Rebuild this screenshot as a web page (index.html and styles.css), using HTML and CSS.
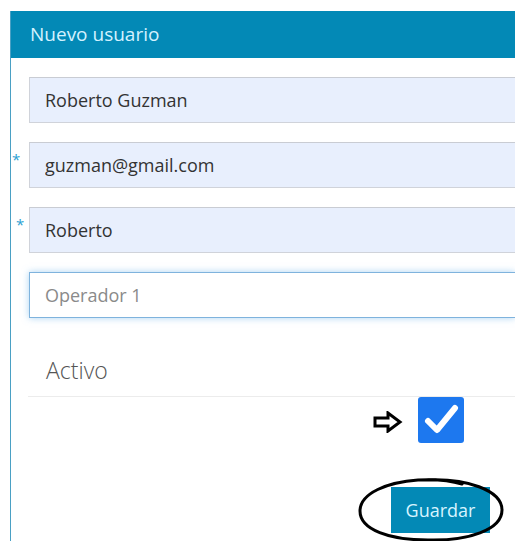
FILE: index.html
```html
<!DOCTYPE html>
<html lang="es">
<head>
<meta charset="utf-8">
<title>Nuevo usuario</title>
<link rel="stylesheet" href="styles.css">
</head>
<body>
<div class="panel">
  <div class="panel-heading">Nuevo usuario</div>
  <div class="panel-body">
    <div class="field">
      <input class="form-control filled" type="text" value="Roberto Guzman">
    </div>
    <div class="field">
      <span class="required req-1">*</span>
      <input class="form-control filled" type="email" value="guzman@gmail.com">
    </div>
    <div class="field">
      <span class="required req-2">*</span>
      <input class="form-control filled" type="text" value="Roberto">
    </div>
    <div class="field">
      <input class="form-control focused" type="text" placeholder="Operador 1">
    </div>

    <div class="legend">Activo</div>

    <div class="check-row">
      <svg class="hint-arrow" width="30" height="22" viewBox="0 0 30 22">
        <path d="M2 7 H15 V2 L27 11 L15 20 V15 H2 Z" fill="none" stroke="#000" stroke-width="3" stroke-linejoin="miter"/>
      </svg>
      <span class="checkbox">
        <svg width="46" height="46" viewBox="0 0 46 46">
          <path d="M10 24 L19 33 L37 11" fill="none" stroke="#fff" stroke-width="6" stroke-linecap="round" stroke-linejoin="round"/>
        </svg>
      </span>
    </div>

    <div class="actions">
      <span class="btn-wrap">
        <button class="btn-primary" type="button">Guardar</button>
        <svg class="mark" width="150" height="68" viewBox="0 0 150 68">
          <path d="M70 4 C110 2 146 14 146 34 C146 54 112 65 72 64 C34 64 4 54 4 35 C4 17 32 6 62 4 C80 3 96 5 106 8" fill="none" stroke="#000" stroke-width="3" stroke-linecap="round"/>
        </svg>
      </span>
    </div>
  </div>
</div>
</body>
</html>
```

FILE: styles.css
```css
html, body {
  margin: 0;
  padding: 0;
  background: #fff;
}

body {
  font-family: "Open Sans", "Noto Sans", "Liberation Sans", sans-serif;
  color: #333;
}

.panel {
  box-sizing: border-box;
  margin: 11px 0 0 10px;
  min-height: calc(100vh - 11px);
  border-left: 1px solid #4aa0c4;
}

.panel-heading {
  height: 47px;
  line-height: 46px;
  padding-left: 19px;
  background: #0389b6;
  color: #d4f2ff;
  font-size: 19px;
}

.panel-body {
  padding: 19px 0 0 18px;
}

.field {
  position: relative;
  margin-bottom: 19px;
}

.form-control {
  display: block;
  box-sizing: border-box;
  width: 100%;
  height: 46px;
  margin: 0;
  padding: 0 15px;
  font-family: inherit;
  font-size: 18px;
  color: #333;
  border-radius: 0;
  outline: none;
}

.filled {
  background: #e8effd;
  border: 1px solid #d0d3da;
  border-top-color: #c9ccd3;
  border-right: 0;
}

.focused {
  background: #fff;
  border: 1px solid #7fb3dd;
  border-right: 0;
  box-shadow: 0 0 7px rgba(102, 175, 233, 0.55);
}

.focused::placeholder {
  color: #8a8a8a;
}

.required {
  position: absolute;
  top: 10px;
  color: #2c9fd2;
  font-size: 15px;
  line-height: 1;
  background: #fff;
}

.req-1 {
  left: -17px;
}

.req-2 {
  left: -13px;
  background: transparent;
}

.legend {
  margin-top: 35px;
  margin-left: -1px;
  padding: 0 0 9px 18px;
  font-size: 23px;
  font-weight: 300;
  color: #555;
  line-height: 34px;
  border-bottom: 1px solid #ececec;
}

.check-row {
  display: flex;
  align-items: center;
  gap: 15px;
  padding-left: 344px;
  margin-top: 0;
}

.hint-arrow {
  display: block;
  margin-top: 4px;
}

.checkbox {
  display: block;
  width: 46px;
  height: 46px;
  background: #1d78ef;
  border-radius: 3px;
}

.checkbox svg {
  display: block;
}

.actions {
  padding-left: 362px;
  margin-top: 44px;
}

.btn-wrap {
  position: relative;
  display: inline-block;
}

.btn-primary {
  display: block;
  width: 99px;
  height: 46px;
  padding: 0;
  border: 0;
  border-radius: 0;
  background: #0389b6;
  color: #d8f4ff;
  font-family: inherit;
  font-size: 18px;
}

.mark {
  position: absolute;
  left: -35px;
  top: -11px;
  pointer-events: none;
}
```
